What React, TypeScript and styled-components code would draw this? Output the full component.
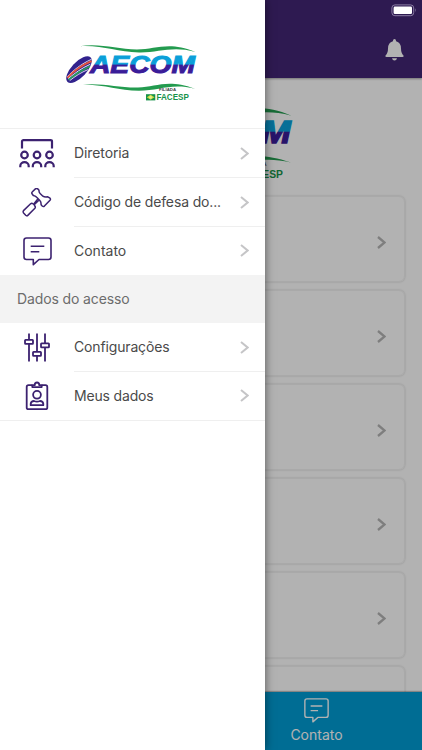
import React from 'react';
import styled, { createGlobalStyle } from 'styled-components';

const GlobalStyle = createGlobalStyle`
  * { box-sizing: border-box; }
  body { margin: 0; overflow: hidden; font-family: Inter, "Liberation Sans", sans-serif; }
  svg { display: block; flex: none; }
`;

const Screen = styled.div`
  position: relative;
  width: 422px;
  height: 750px;
  overflow: hidden;
  background: #fff;
`;

const Page = styled.div`
  display: flex;
  flex-direction: column;
  height: 100%;
`;

const Header = styled.header`
  flex: none;
  display: flex;
  justify-content: flex-end;
  align-items: flex-start;
  height: 78px;
  padding: 39px 18px 0 0;
  background: #432675;
  box-shadow: 0 1px 2px rgba(0, 0, 0, 0.35);
  z-index: 1;
`;

const Content = styled.main`
  flex: 1;
  min-height: 0;
  overflow: hidden;
  padding: 16px 17px 0;
`;

const Banner = styled.div`
  display: flex;
  justify-content: center;
  height: 102px;
`;

const CardList = styled.div`
  display: flex;
  flex-direction: column;
  gap: 8px;
`;

const Card = styled.div`
  flex: none;
  display: flex;
  align-items: center;
  justify-content: flex-end;
  height: 86px;
  padding: 6px 18px 0 0;
  border: 1px solid #f3f3f3;
  border-radius: 6px;
  box-shadow: 0 0 2px rgba(0, 0, 0, 0.22);
`;

const TabBar = styled.nav`
  flex: none;
  display: grid;
  grid-template-columns: 1fr 1fr;
  height: 58px;
  background: #009dd5;
  box-shadow: 0 -1px 1px rgba(0, 0, 0, 0.25);
  z-index: 1;
`;

const Tab = styled.div`
  grid-column: 2;
  display: flex;
  flex-direction: column;
  align-items: center;
  gap: 3px;
  padding-top: 6px;
  color: #fff;
  font-size: 14px;
  line-height: 18px;
`;

const Scrim = styled.div`
  position: absolute;
  inset: 0;
  z-index: 2;
  background: rgba(0, 0, 0, 0.3);
`;

const StatusBar = styled.div`
  position: absolute;
  top: 4px;
  right: 5px;
  z-index: 3;
`;

const Drawer = styled.aside`
  position: absolute;
  inset: 0 auto 0 0;
  z-index: 4;
  width: 265px;
  background: #fff;
  box-shadow: 0 0 9px rgba(0, 0, 0, 0.5);
`;

const Brand = styled.div`
  display: flex;
  justify-content: center;
  height: 129px;
  padding-top: 35px;
  border-bottom: 1px solid #efefef;
`;

const Row = styled.div`
  display: flex;
  height: 49px;

  &:last-child { height: 48px; }
`;

const IconSlot = styled.div`
  flex: none;
  display: flex;
  align-items: center;
  justify-content: center;
  width: 74px;
  color: #3c2270;
`;

const RowBody = styled.div<{ $line: boolean }>`
  flex: 1;
  display: flex;
  align-items: center;
  justify-content: space-between;
  padding-right: 16px;
  border-bottom: 1px solid ${(p) => (p.$line ? '#efefef' : 'transparent')};
`;

const RowLabel = styled.span<{ $spacing: number }>`
  color: #4a4a4a;
  font-size: 14px;
  line-height: 20px;
  letter-spacing: ${(p) => p.$spacing}px;
  white-space: nowrap;
`;

const SectionTitle = styled.div`
  display: flex;
  align-items: center;
  height: 48px;
  padding: 0 0 2px 17px;
  background: #f3f3f3;
  color: #6c6c6c;
  font-size: 14px;
  letter-spacing: -0.12px;
`;

const Group = styled.div<{ $closed?: boolean }>`
  border-bottom: ${(p) => (p.$closed ? '1px solid #efefef' : 'none')};
`;

const Logo = ({ width, id }: { width: number; id: string }) => (
  <svg width={width} height={(width * 75) / 155} viewBox="0 0 155 75">
    <defs>
      <linearGradient id={id} x1="0" y1="20.8" x2="0" y2="38" gradientUnits="userSpaceOnUse">
        <stop offset="0.48" stopColor="#0b9fd9" />
        <stop offset="0.54" stopColor="#3a1d99" />
      </linearGradient>
    </defs>
    <path d="M24.5 11.2C46 8 62 14.4 82 14.4C101 14.4 114 5.8 140.5 17C117 10.4 104 17.8 84 17.4C62 17 47 9.8 24.5 11.2Z" fill="#239b4f" />
    <path d="M25 50C47 47.5 63 53 83 52.6C101 52 112 43.5 140 53.7C116 47.8 104 55.8 84 55.8C62 55.6 48 48.8 25 50Z" fill="#239b4f" />
    <g transform="rotate(-47 24 34.6)">
      <ellipse cx="24" cy="34.6" rx="16.8" ry="7.6" fill="#31228d" />
    </g>
    <g fill="none" strokeLinecap="round">
      <path d="M12.5 41.5C18 35.5 26 29 36 24.5" stroke="#fff" strokeWidth=".8" />
      <path d="M13 42.3C18 37 26 30.6 36 26.4" stroke="#e8533f" strokeWidth="1.7" />
      <path d="M13.5 43.4C20 38.2 26 33.4 35 29.4" stroke="#fff" strokeWidth=".9" />
      <path d="M14 44.4C20 39.4 27 35 34.5 31.5" stroke="#27a35c" strokeWidth="1.5" />
      <path d="M15 45.4C20 41.4 26 37.4 33 34.6" stroke="#fff" strokeWidth=".8" />
    </g>
    <text x="35" y="38" fontFamily="'Liberation Sans', Arial, sans-serif" fontSize="24" fontWeight="700" fontStyle="italic" textLength="105" lengthAdjust="spacingAndGlyphs" fill={`url(#${id})`} stroke={`url(#${id})`} strokeWidth="1">AECOM</text>
    <text x="104" y="56.3" fontFamily="'Liberation Sans', Arial, sans-serif" fontSize="4.4" fontWeight="700" textLength="17" lengthAdjust="spacingAndGlyphs" fill="#444">FILIADA</text>
    <rect x="91" y="59.2" width="9.3" height="6.2" fill="#17924a" />
    <path d="M95.6 59.8L99.5 62.3L95.6 64.8L91.8 62.3Z" fill="#c9dc3c" />
    <circle cx="95.6" cy="62.3" r="1.5" fill="#e5ea8c" />
    <text x="101.5" y="65.4" fontFamily="'Liberation Sans', Arial, sans-serif" fontSize="8.6" fontWeight="700" textLength="32.3" lengthAdjust="spacingAndGlyphs" fill="#17924a">FACESP</text>
  </svg>
);

const Chevron = ({ color, width, height, stroke }: { color: string; width: number; height: number; stroke: number }) => (
  <svg width={width} height={height} viewBox={`0 0 ${width} ${height}`}>
    <path d={`M1 1L${width - 1.4} ${height / 2}L1 ${height - 1}`} fill="none" stroke={color} strokeWidth={stroke} />
  </svg>
);

const BoardIcon = () => (
  <svg width="36" height="30" viewBox="0 0 36 30" fill="none" stroke="currentColor" strokeWidth="2.2">
    <path d="M3 9.5V2.5Q3 1.2 4.5 1.2H31.5Q33 1.2 33 2.5V9.5" />
    {[5.5, 18, 30.5].map((x) => (
      <g key={x}>
        <circle cx={x} cy="16" r="3.3" />
        <path d={`M${x - 4.2} 28.2V27A4.2 3.8 0 0 1 ${x + 4.2} 27V28.2`} />
      </g>
    ))}
  </svg>
);

const GavelIcon = () => (
  <svg width="30" height="30" viewBox="0 0 30 30" fill="none" stroke="currentColor" strokeWidth="1.5" strokeLinejoin="round">
    <path d="M10.2 6Q9.3 4.8 10.4 3.8L13.4 .9Q14.8 0 16 1.1L17 2.2Q16.8 4.3 18.1 5.5L20.9 8.2Q22.5 9.3 25.8 8.8L28 10.2Q28.9 11.3 28 12.3L22.4 18.1Q21.3 19 20.2 18L19.1 16.8Q19.3 14.2 17.8 12.6L14.7 9.3Q13.3 7.7 11.3 7.5Z" />
    <path d="M15.8 10.9L12 15.6M12.2 16.8L10.9 15.7Q9.8 14.8 8.6 15.8L1.5 22.6Q.7 23.8 1.6 25L3.7 27.3Q4.8 28.4 5.8 27.4L12.9 20.3Q13.7 19.3 12.9 18L12.2 16.8L16.8 12.3" />
  </svg>
);

const MessageIcon = ({ width = 29, height = 29 }: { width?: number; height?: number }) => (
  <svg width={width} height={height} viewBox="0 0 29 29" preserveAspectRatio="none" fill="none" stroke="currentColor" strokeWidth="1.6" strokeLinejoin="round">
    <path d="M3.5 1H25.5Q28 1 28 3.5V20Q28 22.5 25.5 22.5H16L10.3 27.7V22.5H3.5Q1 22.5 1 20V3.5Q1 1 3.5 1Z" />
    <path d="M7.7 9.3H21.3M7.7 14.7H16.3" />
  </svg>
);

const SlidersIcon = () => (
  <svg width="26" height="30" viewBox="0 0 26 30" fill="none" stroke="currentColor" strokeWidth="1.8">
    <path d="M5 .5V6.8M5 10.9V28.5M13 .5V18.8M13 23V28.5M21 .5V10.3M21 14.4V28.5" />
    <rect x="1" y="6.8" width="8" height="4" rx=".6" />
    <rect x="9" y="18.9" width="8" height="4" rx=".6" />
    <rect x="17" y="10.3" width="8" height="4" rx=".6" />
  </svg>
);

const BadgeIcon = () => (
  <svg width="24" height="30" viewBox="0 0 24 30" fill="none" stroke="currentColor" strokeWidth="1.8" strokeLinejoin="round">
    <path d="M7.3 4.2H3.5Q1.7 4.2 1.7 6V26.4Q1.7 28.2 3.5 28.2H20.5Q22.3 28.2 22.3 26.4V6Q22.3 4.2 20.5 4.2H16.7" />
    <path d="M7.3 6.1V4.2H9.7Q9.7 1.5 12 1.5Q14.3 1.5 14.3 4.2H16.7V6.1Z" />
    <circle cx="12" cy="13.8" r="3.9" />
    <path d="M5.7 24.2V22.8Q6.1 20 9 20Q12 21.4 15 20Q17.9 20 18.3 22.8V24.2Z" />
  </svg>
);

const BellIcon = () => (
  <svg width="19" height="22" viewBox="0 0 19 22" fill="#fff">
    <path d="M9.5 0Q11 0 11.1 2.2Q16 3.4 16 9.5Q16 14.2 18.5 16.4Q19 18 17.5 18H1.5Q0 18 .5 16.4Q3 14.2 3 9.5Q3 3.4 7.9 2.2Q8 0 9.5 0Z" />
    <path d="M7 19.2H12Q11.5 21.4 9.5 21.4Q7.5 21.4 7 19.2Z" />
  </svg>
);

const BatteryIcon = () => (
  <svg width="26" height="13" viewBox="0 0 26 13">
    <rect x=".9" y=".9" width="21.8" height="10.8" rx="3" fill="none" stroke="#8b7da4" strokeWidth="1" />
    <rect x="2.6" y="2.6" width="18.4" height="7.4" rx="1.3" fill="#fff" />
    <path d="M24.2 4.3Q25.7 6.3 24.2 8.3Z" fill="#8b7da4" />
  </svg>
);

const primaryItems = [
  { label: 'Diretoria', Icon: BoardIcon, spacing: -0.1 },
  { label: 'Código de defesa do...', Icon: GavelIcon, spacing: -0.14 },
  { label: 'Contato', Icon: MessageIcon, spacing: 0 },
];

const accessItems = [
  { label: 'Configurações', Icon: SlidersIcon, spacing: -0.15 },
  { label: 'Meus dados', Icon: BadgeIcon, spacing: -0.17 },
];

type Item = (typeof primaryItems)[number];

const MenuGroup = ({ items, closed }: { items: Item[]; closed?: boolean }) => (
  <Group $closed={closed}>
    {items.map(({ label, Icon, spacing }, i) => (
      <Row key={label}>
        <IconSlot><Icon /></IconSlot>
        <RowBody $line={i < items.length - 1}>
          <RowLabel $spacing={spacing}>{label}</RowLabel>
          <Chevron color="#c5c5c7" width={9} height={13} stroke={2} />
        </RowBody>
      </Row>
    ))}
  </Group>
);

export default function App() {
  return (
    <>
      <GlobalStyle />
      <Screen>
        <Page>
          <Header><BellIcon /></Header>
          <Content>
            <Banner><Logo width={198} id="banner-letters" /></Banner>
            <CardList>
              {[0, 1, 2, 3, 4, 5].map((n) => (
                <Card key={n}><Chevron color="#b5b5b5" width={9} height={13} stroke={2.3} /></Card>
              ))}
            </CardList>
          </Content>
          <TabBar>
            <Tab>
              <MessageIcon width={25} height={25} />
              Contato
            </Tab>
          </TabBar>
        </Page>
        <Scrim />
        <StatusBar><BatteryIcon /></StatusBar>
        <Drawer>
          <Brand><Logo width={155} id="drawer-letters" /></Brand>
          <MenuGroup items={primaryItems} />
          <SectionTitle>Dados do acesso</SectionTitle>
          <MenuGroup items={accessItems} closed />
        </Drawer>
      </Screen>
    </>
  );
}
